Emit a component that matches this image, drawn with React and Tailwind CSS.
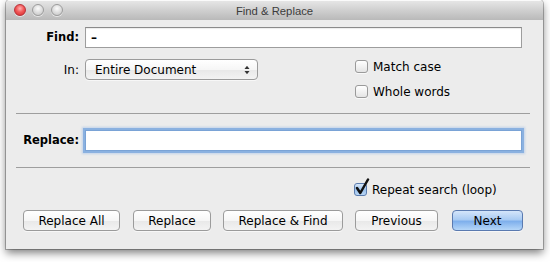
import React from 'react';

const Light = ({ red }) => (
  <div
    className={
      red
        ? 'h-[12px] w-[12px] rounded-full border border-[#b8323a] bg-[radial-gradient(circle_at_50%_35%,#ffb3b3_0%,#f25a5a_45%,#d62a2a_100%)] shadow-[0_1px_0_rgba(255,255,255,0.6)]'
        : 'h-[12px] w-[12px] rounded-full border border-[#9c9c9c] bg-[radial-gradient(circle_at_50%_35%,#fbfbfb_0%,#dadada_55%,#c2c2c2_100%)] shadow-[0_1px_0_rgba(255,255,255,0.6)]'
    }
  />
);

const Checkbox = ({ checked }) => (
  <div className="relative h-[13px] w-[13px] shrink-0">
    <div
      className={
        checked
          ? 'h-[13px] w-[13px] rounded-[3px] border border-[#5b7cae] bg-[linear-gradient(#d7e7f8,#9cc2ec_55%,#b9d6f5)]'
          : 'h-[13px] w-[13px] rounded-[3px] border border-[#9a9a9a] bg-[linear-gradient(#ffffff,#f2f2f2_50%,#e4e4e4)] shadow-[0_1px_0_rgba(255,255,255,0.7)]'
      }
    />
    {checked && (
      <svg className="absolute left-[1px] top-[-5px]" width="15" height="17" viewBox="0 0 15 17">
        <path d="M2 10 L5.3 15 L13 1.5" fill="none" stroke="#111" strokeWidth="2.5" strokeLinecap="round" strokeLinejoin="round" />
      </svg>
    )}
  </div>
);

const Button = ({ children, w, primary }) => (
  <div
    className={
      (primary
        ? 'border-[#5a7ab0] bg-[linear-gradient(#d4e5fa,#a9cbf3_45%,#7fb0ec_55%,#b5d6f8)] '
        : 'border-[#9b9b9b] bg-[linear-gradient(#ffffff,#f6f6f6_50%,#e9e9e9_55%,#f3f3f3)] ') +
      'flex h-[21px] items-center justify-center rounded-[4px] border text-[12px] text-black shadow-[0_1px_0_rgba(255,255,255,0.6)] ' +
      w
    }
  >
    {children}
  </div>
);

export default function App() {
  return (
    <div
      className="min-h-screen bg-white pl-[6px] text-[12px] text-black"
      style={{ fontFamily: '"DejaVu Sans", sans-serif' }}
    >
      <div className="flex h-[249px] w-[537px] flex-col overflow-hidden rounded-t-[4px] bg-[#ececec] shadow-[0_0_0_1px_rgba(0,0,0,0.25),0_4px_8px_rgba(0,0,0,0.5)]">
        {/* title bar */}
        <div className="relative flex h-[20px] items-center bg-[linear-gradient(#e8e8e8,#d0d0d0_50%,#b9b9b9)] shadow-[inset_0_1px_0_rgba(255,255,255,0.8)]">
          <div className="flex items-center gap-[6.5px] pl-[7.5px]">
            <Light red />
            <Light />
            <Light />
          </div>
          <div
            className="absolute inset-x-0 top-[3px] text-center text-[11.3px] text-[#3c3c3c]"
            style={{ fontFamily: '"Liberation Sans", sans-serif' }}
          >
            Find &amp; Replace
          </div>
        </div>

        {/* Find */}
        <div className="mt-[7px] flex items-center">
          <div className="w-[73px] text-right text-[11.5px] font-bold">Find:</div>
          <div className="ml-[6px] flex h-[21px] w-[437px] items-center border border-[#9d9d9d] border-t-[#8a8a8a] bg-white pl-[5px] font-bold shadow-[inset_0_1px_1px_rgba(0,0,0,0.08)]">
            –
          </div>
        </div>

        {/* In + options */}
        <div className="mt-[11px] flex items-start">
          <div className="flex items-center">
            <div className="w-[73px] text-right">In:</div>
            <div className="ml-[6px] flex h-[21px] w-[173px] items-center justify-between rounded-[4px] border border-[#9b9b9b] bg-[linear-gradient(#ffffff,#f6f6f6_50%,#e9e9e9_55%,#f3f3f3)] pl-[9px] pr-[7px] shadow-[0_1px_0_rgba(255,255,255,0.6)]">
              <span>Entire Document</span>
              <svg width="6" height="10" viewBox="0 0 6 10">
                <path d="M0.5 4 L3 0.8 L5.5 4 Z" fill="#333" />
                <path d="M0.5 6 L3 9.2 L5.5 6 Z" fill="#333" />
              </svg>
            </div>
          </div>
          <div className="ml-[97px] mt-[1px] flex flex-col gap-[12px]">
            <div className="flex h-[13px] items-center gap-[5px]">
              <Checkbox />
              <span>Match case</span>
            </div>
            <div className="flex h-[13px] items-center gap-[5px]">
              <Checkbox />
              <span>Whole words</span>
            </div>
          </div>
        </div>

        <div className="ml-[10px] mt-[15px] h-px w-[514px] bg-[#9e9e9e]" />

        {/* Replace */}
        <div className="mt-[16px] flex items-center">
          <div className="w-[73px] text-right text-[11.5px] font-bold">Replace:</div>
          <div className="ml-[6px] h-[21px] w-[437px] border border-[#7aa3d6] bg-white shadow-[0_0_0_2px_rgba(120,165,220,0.75),0_0_2px_3px_rgba(140,180,230,0.45)]" />
        </div>

        <div className="ml-[10px] mt-[16px] h-px w-[514px] bg-[#9e9e9e]" />

        {/* loop option */}
        <div className="ml-[348px] mt-[15px] flex h-[13px] items-center gap-[5px]">
          <Checkbox checked />
          <span>Repeat search (loop)</span>
        </div>

        {/* buttons */}
        <div className="ml-[17px] mt-[14px] flex items-center">
          <Button w="w-[97px]">Replace All</Button>
          <div className="ml-[13px]">
            <Button w="w-[78px]">Replace</Button>
          </div>
          <div className="ml-[12px]">
            <Button w="w-[120px]">Replace &amp; Find</Button>
          </div>
          <div className="ml-[12px]">
            <Button w="w-[83px]">Previous</Button>
          </div>
          <div className="ml-[14px]">
            <Button w="w-[71px]" primary>
              Next
            </Button>
          </div>
        </div>
      </div>
    </div>
  );
}
